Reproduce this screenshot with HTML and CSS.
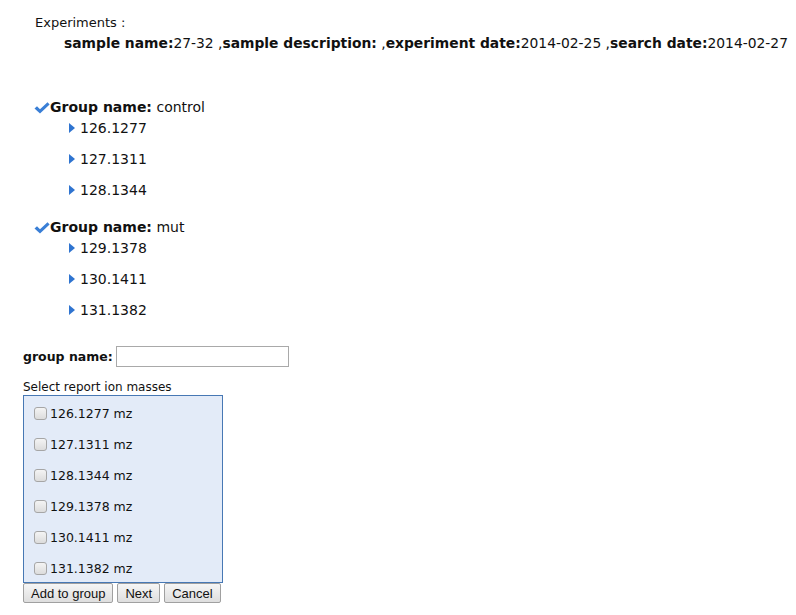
FILE: index.html
```html
<!DOCTYPE html>
<html lang="en">

<head>
    <meta charset="UTF-8">
    <meta name="viewport" content="width=device-width, initial-scale=1.0">
    <title>Report ion groups</title>
    <link rel="stylesheet" href="styles.css">
</head>

<body>

    <div class="experiments">
        <div class="exp-title">Experiments :</div>
        <div class="exp-line">
            <b>sample name:</b>27-32 ,<b>sample description:</b> ,<b>experiment date:</b>2014-02-25 ,<b>search date:</b>2014-02-27
        </div>
    </div>

    <div class="groups">
        <div class="group">
            <div class="group-head">
                <svg class="check" width="16" height="12" viewBox="0 0 16 12">
                    <path d="M0.5 6.5 L3 4.2 L6 7.3 L13.5 0.3 L15.6 2.5 L6 11.5 Z" fill="#3a7fd6" />
                </svg>
                <b>Group name:</b>&nbsp;control
            </div>
            <ul class="ions">
                <li><span class="arrow"></span>126.1277</li>
                <li><span class="arrow"></span>127.1311</li>
                <li><span class="arrow"></span>128.1344</li>
            </ul>
        </div>
        <div class="group">
            <div class="group-head">
                <svg class="check" width="16" height="12" viewBox="0 0 16 12">
                    <path d="M0.5 6.5 L3 4.2 L6 7.3 L13.5 0.3 L15.6 2.5 L6 11.5 Z" fill="#3a7fd6" />
                </svg>
                <b>Group name:</b>&nbsp;mut
            </div>
            <ul class="ions">
                <li><span class="arrow"></span>129.1378</li>
                <li><span class="arrow"></span>130.1411</li>
                <li><span class="arrow"></span>131.1382</li>
            </ul>
        </div>
    </div>

    <form class="group-form">
        <div class="name-row">
            <label for="group-name">group name:</label>
            <input id="group-name" type="text" class="name-input">
        </div>
        <div class="select-label">Select report ion masses</div>
        <div class="mass-box">
            <label class="mass"><input type="checkbox">126.1277 mz</label>
            <label class="mass"><input type="checkbox">127.1311 mz</label>
            <label class="mass"><input type="checkbox">128.1344 mz</label>
            <label class="mass"><input type="checkbox">129.1378 mz</label>
            <label class="mass"><input type="checkbox">130.1411 mz</label>
            <label class="mass"><input type="checkbox">131.1382 mz</label>
        </div>
        <div class="controls">
            <button type="button" class="btn">Add to group</button>
            <button type="button" class="btn">Next</button>
            <button type="button" class="btn">Cancel</button>
        </div>
    </form>

</body>

</html>
```

FILE: styles.css
```css
* {
    box-sizing: border-box;
}

body {
    margin: 0;
    padding: 0;
    font-family: 'DejaVu Sans', Verdana, sans-serif;
    font-size: 13px;
    color: #111;
    background-color: white;
}

.experiments {
    padding-top: 13px;
    padding-left: 35px;
}

.exp-title,
.exp-line {
    line-height: 20px;
    white-space: nowrap;
}

.exp-line {
    padding-left: 29px;
    font-size: 13.85px;
}

.groups {
    margin-top: 44px;
    padding-left: 34px;
}

.group {
    padding-bottom: 6px;
}

.group-head {
    display: flex;
    align-items: center;
    height: 20px;
    font-size: 14px;
}

.check {
    display: block;
    margin-top: 2px;
}

.ions {
    list-style: none;
    margin: 1px 0 0 0;
    padding: 0 0 0 35px;
}

.ions li {
    display: flex;
    align-items: center;
    height: 20px;
    margin-bottom: 11px;
    font-size: 14px;
}

.arrow {
    width: 0;
    height: 0;
    border-top: 5px solid transparent;
    border-bottom: 5px solid transparent;
    border-left: 6px solid #2f74d0;
    margin-right: 5px;
}

.group-form {
    padding-left: 23px;
    padding-top: 9px;
}

.name-row {
    display: flex;
    align-items: center;
    height: 21px;
}

.name-row label {
    font-weight: bold;
    font-size: 12.5px;
    margin-right: 3px;
}

.name-input {
    width: 173px;
    height: 21px;
    border: 1px solid #a9a9a9;
    margin: 0;
    padding: 1px 2px;
    font-size: 13px;
}

.select-label {
    margin-top: 12px;
    line-height: 16px;
    font-size: 12px;
}

.mass-box {
    width: 200px;
    border: 1px solid #4778b4;
    background-color: #e3ebf8;
    padding: 2px 0 0 6px;
    height: 188px;
}

.mass {
    display: flex;
    align-items: center;
    height: 31px;
    font-size: 12.5px;
}

.mass input {
    appearance: none;
    margin: 0 3px 0 4px;
    width: 13px;
    height: 13px;
    border: 1px solid #a6a6a6;
    border-radius: 3px;
    background: linear-gradient(#f4f4f4, #dcdcdc);
}

.controls {
    display: flex;
    gap: 4px;
}

.btn {
    font-family: 'Liberation Sans', Arial, sans-serif;
    font-size: 13px;
    height: 20px;
    padding: 0 7px;
    border: 1px solid #a0a0a0;
    border-radius: 2px;
    background: linear-gradient(#f6f6f6, #dedede);
    color: #111;
}
```
